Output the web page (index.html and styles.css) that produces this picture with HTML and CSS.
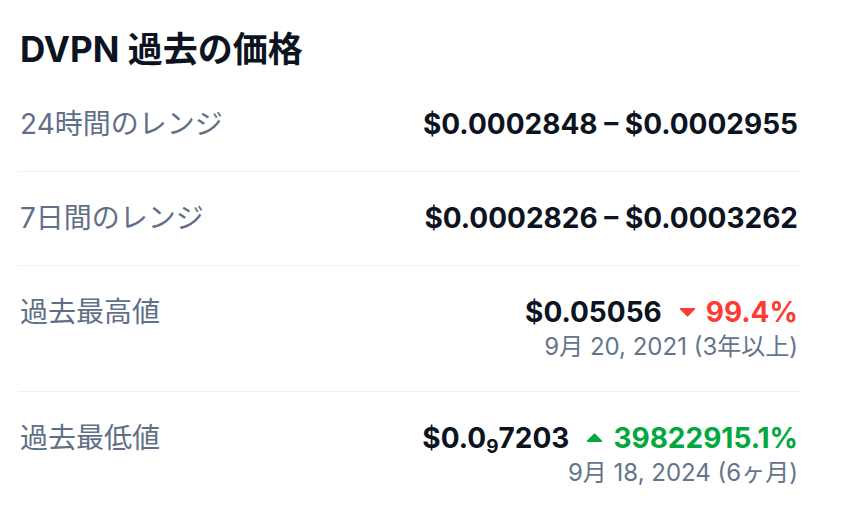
FILE: index.html
```html
<!DOCTYPE html>
<html lang="ja">
<head>
<meta charset="utf-8">
<link rel="stylesheet" href="styles.css">
</head>
<body>
<section class="panel">
  <h2 class="title">DVPN 過去の価格</h2>
  <div class="row">
    <div class="label">24時間のレンジ</div>
    <div class="value">$0.0002848 – $0.0002955</div>
  </div>
  <div class="row">
    <div class="label">7日間のレンジ</div>
    <div class="value">$0.0002826 – $0.0003262</div>
  </div>
  <div class="row">
    <div class="label">過去最高値</div>
    <div class="right">
      <div class="value"><span class="price">$0.05056</span><span class="change down"><svg class="caret" viewBox="0 0 17 10"><path d="M1.5 1h14a.8.8 0 0 1 .6 1.3L9.1 9.2a.8.8 0 0 1-1.2 0L.9 2.3A.8.8 0 0 1 1.5 1z"/></svg>99.4%</span></div>
      <div class="date">9月 20, 2021 (3年以上)</div>
    </div>
  </div>
  <div class="row">
    <div class="label">過去最低値</div>
    <div class="right">
      <div class="value"><span class="price">$0.0<sub class="sub">9</sub>7203</span><span class="change up"><svg class="caret" viewBox="0 0 17 10"><path d="M1.5 9h14a.8.8 0 0 0 .6-1.3L9.1.8a.8.8 0 0 0-1.2 0L.9 7.7A.8.8 0 0 0 1.5 9z"/></svg>39822915.1%</span></div>
      <div class="date">9月 18, 2024 (6ヶ月)</div>
    </div>
  </div>
</section>
</body>
</html>
```
FILE: styles.css
```css
* { box-sizing: border-box; }
body {
  margin: 0;
  background: #fff;
  font-family: Inter, "Noto Sans CJK JP", sans-serif;
  color: #0d1421;
}
.panel {
  width: 801px;
  padding: 0 0 0 18px;
}
.title {
  margin: 27px 0 7px 2px;
  font-size: 35px;
  line-height: 44px;
  font-weight: 700;
  color: #0d1421;
}
.row {
  display: flex;
  justify-content: space-between;
  align-items: flex-start;
  padding: 29px 0 30px 2px;
  border-bottom: 1px solid #eff2f5;
}
.label {
  font-size: 28px;
  line-height: 34px;
  color: #5f6f87;
}
.value {
  font-size: 28px;
  line-height: 34px;
  font-weight: 700;
  color: #0d1421;
  padding-right: 3px;
  white-space: pre;
  text-align: right;
}
.right {
  display: flex;
  flex-direction: column;
  align-items: flex-end;
}
.change {
  margin-left: 17px;
}
.down { color: #ff3a33; }
.up { color: #00a83e; }
.caret {
  width: 17px;
  height: 10px;
  margin-right: 10px;
  fill: currentColor;
  vertical-align: 5px;
}
.sub {
  font-size: 19px;
  vertical-align: -5px;
  line-height: 0;
}
.date {
  margin-top: 4px;
  font-size: 24px;
  line-height: 28px;
  color: #64748b;
  padding-right: 3px;
}
```
